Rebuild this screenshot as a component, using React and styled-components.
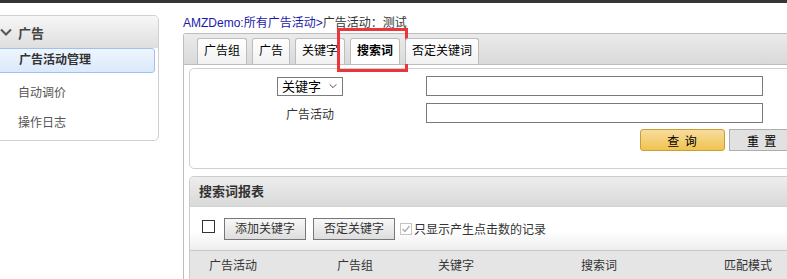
import React from 'react';
import styled, { createGlobalStyle } from 'styled-components';

const GlobalStyle = createGlobalStyle`
  html, body {
    margin: 0;
    padding: 0;
    overflow: hidden;
    background: #fff;
  }
  body {
    font-family: "Liberation Sans", "Noto Sans CJK SC", sans-serif;
    font-size: 12px;
    color: #333;
  }
  * { box-sizing: border-box; }
`;

const tabs = ['广告组', '广告', '关键字', '搜索词', '否定关键词'];
const columns = [
  { label: '广告活动', width: 147, pad: 19 },
  { label: '广告组', width: 101 },
  { label: '关键字', width: 143 },
  { label: '搜索词', width: 143 },
  { label: '匹配模式', width: 120 },
];

function Chevron({ size = 12, color = '#555', stroke = 2 }) {
  return (
    <svg width={size} height={size / 2 + 2} viewBox="0 0 12 8" fill="none">
      <path d="M1 1.5 L6 6.5 L11 1.5" stroke={color} strokeWidth={stroke} />
    </svg>
  );
}

function App() {
  return (
    <Page>
      <GlobalStyle />
      <TopBar />
      <Layout>
        <Sidebar>
          <SideHeader>
            <Chevron />
            <span>广告</span>
          </SideHeader>
          <SideList>
            <SideItem $active>广告活动管理</SideItem>
            <SideItem>自动调价</SideItem>
            <SideItem>操作日志</SideItem>
          </SideList>
        </Sidebar>

        <Main>
          <Breadcrumb>
            <CrumbLink>AMZDemo:所有广告活动&gt;</CrumbLink>广告活动：测试
          </Breadcrumb>
          <TabPanel>
            <TabBar>
              {tabs.map((t) => (
                <Tab key={t} $active={t === '搜索词'}>
                  {t}
                  {t === '搜索词' && <Highlight />}
                </Tab>
              ))}
            </TabBar>
            <TabBody>
              <SearchBox>
                <FormGrid>
                  <Select>
                    <span>关键字</span>
                    <Chevron size={8} color="#444" stroke={1.4} />
                  </Select>
                  <TextInput />
                  <FieldLabel>广告活动</FieldLabel>
                  <TextInput />
                </FormGrid>
                <ButtonRow>
                  <PrimaryButton>查 询</PrimaryButton>
                  <ResetButton>重 置</ResetButton>
                </ButtonRow>
              </SearchBox>

              <Report>
                <ReportHeader>搜索词报表</ReportHeader>
                <Toolbar>
                  <CheckBox />
                  <ToolButton>添加关键字</ToolButton>
                  <ToolButton>否定关键字</ToolButton>
                  <DisabledCheck>
                    <svg width="10" height="10" viewBox="0 0 10 10" fill="none">
                      <path d="M1.5 5 L4 7.5 L8.5 2" stroke="#aaa" strokeWidth="1.2" />
                    </svg>
                  </DisabledCheck>
                  <CheckLabel>只显示产生点击数的记录</CheckLabel>
                </Toolbar>
                <TableHead>
                  {columns.map((c) => (
                    <HeadCell key={c.label} $width={c.width} $pad={c.pad}>
                      {c.label}
                    </HeadCell>
                  ))}
                </TableHead>
              </Report>
            </TabBody>
          </TabPanel>
        </Main>
      </Layout>
    </Page>
  );
}

export default App;

const Page = styled.div`
  width: 787px;
  height: 279px;
  overflow: hidden;
`;

const TopBar = styled.div`
  height: 3px;
  background: #353535;
`;

const Layout = styled.div`
  display: flex;
  align-items: flex-start;
  padding-top: 12px;
`;

const Sidebar = styled.div`
  flex-shrink: 0;
  margin-left: -20px;
  width: 179px;
  border: 1px solid #cfcfcf;
  border-radius: 5px;
  overflow: hidden;
`;

const SideHeader = styled.div`
  display: flex;
  align-items: center;
  gap: 6px;
  height: 32px;
  padding-left: 19px;
  background: linear-gradient(#f7f7f7, #dedede);
  font-size: 13px;
  font-weight: bold;
  color: #444;
`;

const SideList = styled.div`
  padding: 0 3px 2px 0;
`;

const SideItem = styled.div`
  padding-left: 37px;
  line-height: ${(p) => (p.$active ? '23px' : '30px')};
  margin-bottom: ${(p) => (p.$active ? '5px' : '0')};
  font-weight: ${(p) => (p.$active ? 'bold' : 'normal')};
  color: ${(p) => (p.$active ? '#333' : '#555')};
  border: ${(p) => (p.$active ? '1px solid #9fc2ec' : 'none')};
  border-radius: 3px;
  background: ${(p) => (p.$active ? 'linear-gradient(#eef5fe, #dbe9fb)' : 'transparent')};
`;

const Main = styled.div`
  flex-shrink: 0;
  width: 640px;
  margin-left: 24px;
`;

const Breadcrumb = styled.div`
  line-height: 16px;
  padding-bottom: 2px;
  color: #333;
  white-space: nowrap;
`;

const CrumbLink = styled.span`
  color: #1a1aa8;
`;

const TabPanel = styled.div`
  border-left: 1px solid #bdbdbd;
  border-top: 1px solid #bdbdbd;
  border-top-left-radius: 3px;
  height: 260px;
`;

const TabBar = styled.div`
  display: flex;
  align-items: flex-end;
  height: 31px;
  padding-left: 13px;
  background: linear-gradient(#ebebeb, #d9d9d9);
  border-bottom: 1px solid #bdbdbd;
`;

const Tab = styled.div`
  position: relative;
  height: 26px;
  line-height: 25px;
  padding: 0 6px;
  margin-right: 5px;
  border: 1px solid #bdbdbd;
  border-bottom: none;
  border-radius: 3px 3px 0 0;
  background: ${(p) => (p.$active ? '#fff' : 'linear-gradient(#ffffff, #f1f1f1)')};
  font-weight: ${(p) => (p.$active ? 'bold' : 'normal')};
  color: #000;
  white-space: nowrap;
`;

const Highlight = styled.div`
  position: absolute;
  left: -14px;
  top: -11px;
  right: -9px;
  bottom: -8px;
  border: 3px solid #e8363b;
  pointer-events: none;
`;

const TabBody = styled.div`
  padding: 3px 0 0 5px;
`;

const SearchBox = styled.div`
  border: 1px solid #d0d0d0;
  border-radius: 5px 0 0 5px;
  padding: 7px 0 17px 0;
`;

const FormGrid = styled.div`
  display: grid;
  grid-template-columns: 180px 337px;
  column-gap: 26px;
  row-gap: 7px;
  padding-left: 30px;
  align-items: center;
`;

const Select = styled.div`
  justify-self: center;
  display: flex;
  align-items: center;
  justify-content: space-between;
  width: 66px;
  height: 19px;
  padding: 0 5px 0 4px;
  border: 1px solid #7a7a7a;
  font-size: 13px;
  line-height: 17px;
  color: #000;
`;

const FieldLabel = styled.div`
  text-align: center;
  color: #333;
`;

const TextInput = styled.input`
  width: 337px;
  height: 20px;
  border: 1px solid #7a7a7a;
  margin: 0;
  padding: 0 3px;
  outline: none;
`;

const ButtonRow = styled.div`
  display: flex;
  gap: 4px;
  margin-top: 6px;
  padding-left: 450px;
`;

const BaseButton = styled.div`
  flex-shrink: 0;
  display: flex;
  align-items: center;
  justify-content: center;
  width: 85px;
  height: 22px;
  font-size: 12px;
  letter-spacing: 1px;
  color: #000;
  white-space: pre;
`;

const PrimaryButton = styled(BaseButton)`
  border: 1px solid #c99e35;
  border-radius: 3px;
  background: linear-gradient(#f8dc9e, #f0c350);
`;

const ResetButton = styled(BaseButton)`
  border: 1px solid #adadad;
  background: #e1e1e1;
  justify-content: flex-start;
  padding-left: 17px;
`;

const Report = styled.div`
  margin-top: 7px;
  border: 1px solid #cccccc;
  border-bottom: none;
  border-top-left-radius: 5px;
  overflow: hidden;
`;

const ReportHeader = styled.div`
  height: 30px;
  line-height: 29px;
  padding-left: 9px;
  background: linear-gradient(#ededed, #d9d9d9);
  border-bottom: 1px solid #d2d2d2;
  font-size: 13px;
  font-weight: bold;
  color: #333;
`;

const Toolbar = styled.div`
  display: flex;
  align-items: center;
  height: 44px;
  padding-left: 12px;
  background: linear-gradient(#fff 55%, #eeeeee);
  border-bottom: 1px solid #c8c8c8;
`;

const CheckBox = styled.span`
  width: 13px;
  height: 13px;
  margin-top: -4px;
  margin-right: 9px;
  border: 1px solid #333;
  background: #fff;
`;

const ToolButton = styled.div`
  height: 22px;
  line-height: 20px;
  padding: 0 10px;
  margin-right: 7px;
  border: 1px solid #777;
  background: linear-gradient(#f8f8f8, #dddddd);
  color: #333;
  white-space: nowrap;
`;

const DisabledCheck = styled.span`
  display: flex;
  align-items: center;
  justify-content: center;
  width: 12px;
  height: 12px;
  margin-left: -2px;
  margin-right: 2px;
  border: 1px solid #c4c4c4;
  background: #fff;
`;

const CheckLabel = styled.span`
  color: #333;
  white-space: nowrap;
`;

const TableHead = styled.div`
  display: flex;
  height: 30px;
  background: #e5e5e5;
`;

const HeadCell = styled.div`
  flex-shrink: 0;
  width: ${(p) => p.$width}px;
  padding-left: ${(p) => p.$pad || 0}px;
  line-height: 30px;
  color: #333;
  white-space: nowrap;
`;
